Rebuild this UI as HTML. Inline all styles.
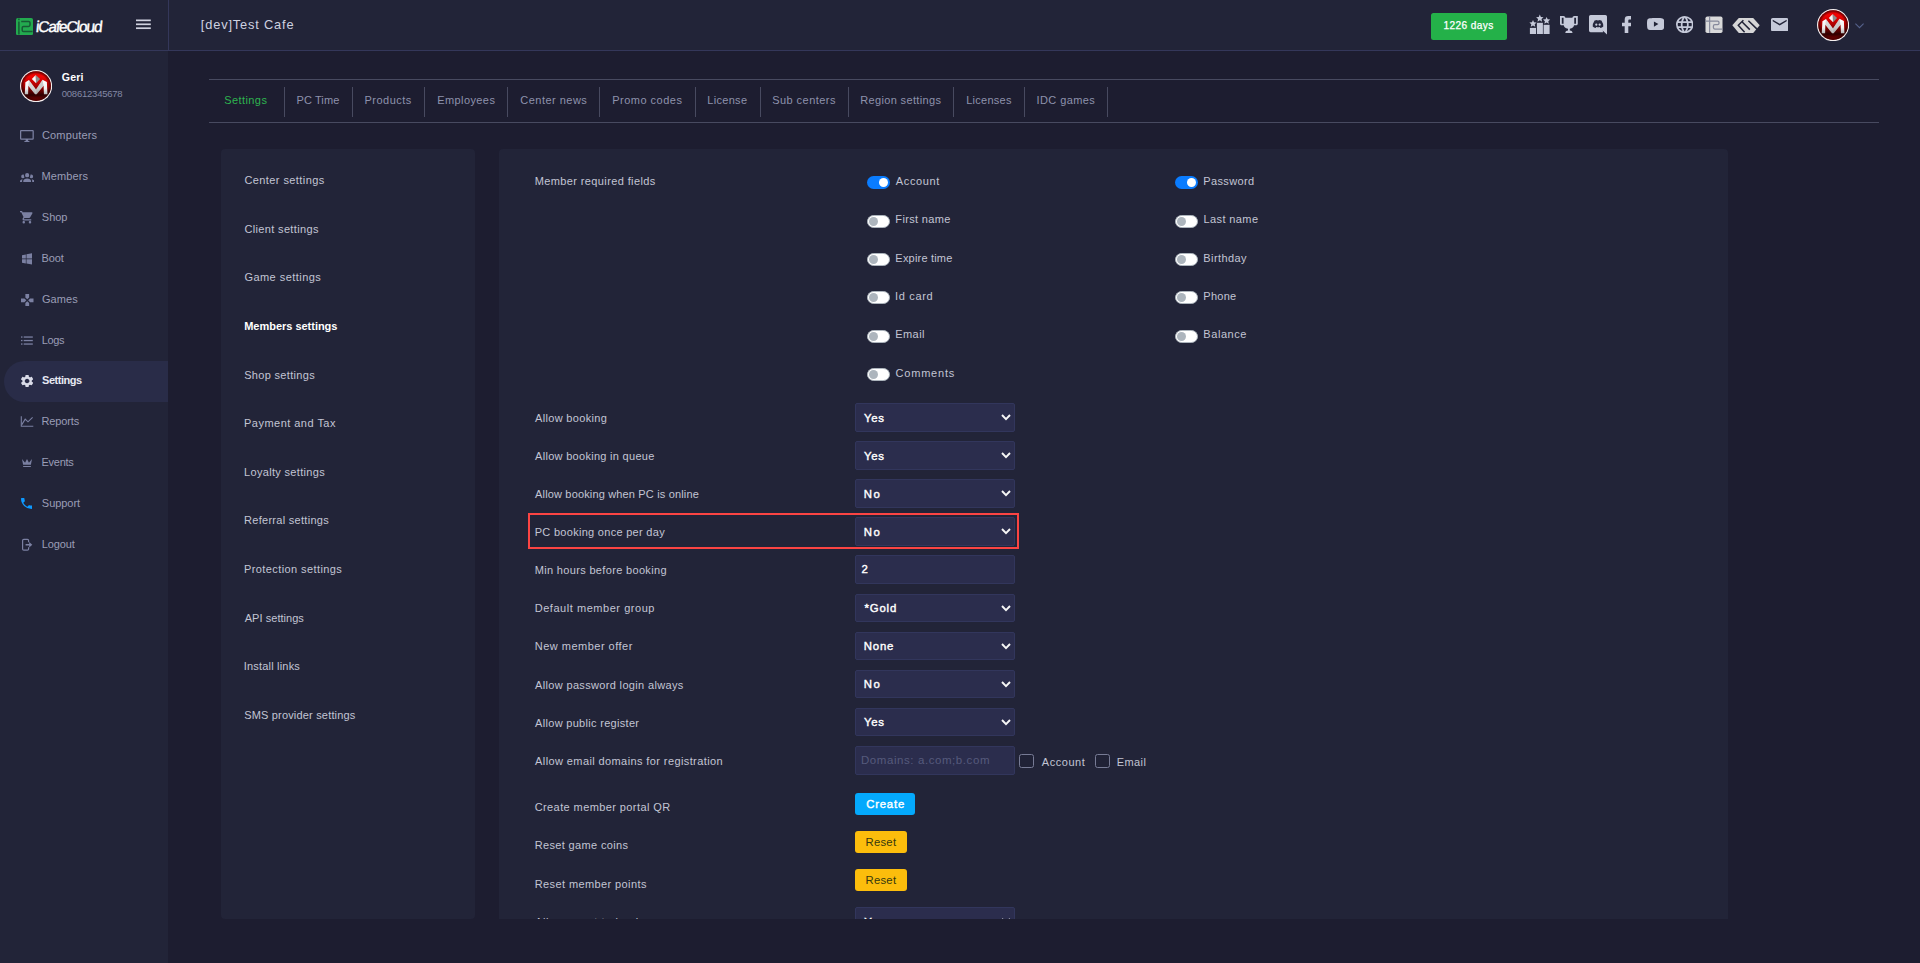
<!DOCTYPE html>
<html><head><meta charset="utf-8"><title>iCafeCloud</title>
<style>
*{box-sizing:border-box;margin:0;padding:0}
html,body{width:1920px;height:963px;overflow:hidden;background:#1d1d30;font-family:"Liberation Sans",sans-serif;}
.a{position:absolute}
.t{position:absolute;white-space:nowrap;line-height:20px;height:20px}
#hdr{left:0;top:0;width:1920px;height:50px;background:#222438}
#hline{left:0;top:50px;width:1920px;height:1px;background:#34375a}
#side{left:0;top:51px;width:168px;height:912px;background:#222438}
#vline{left:168px;top:0;width:1px;height:50px;background:#34375a}
#act{left:4px;top:361px;width:164px;height:41px;background:#292c48;border-radius:20.5px 0 0 20.5px}
.hl{left:209px;width:1670px;height:1px;background:#484a60}
.vs{top:87px;width:1px;height:30px;background:#484a60}
.panel{background:#222438;border-radius:4px}
.sel{left:855px;width:160px;height:29px;background:#2b2d4d;border:1px solid #32365c;border-radius:2px}
.sel svg{position:absolute;right:2px;top:7px}
.tog{width:23px;height:13px;border-radius:7px}
.tog.off{background:#fff;border:1px solid #adb5bd}
.tog.off i{position:absolute;left:1px;top:1px;width:9px;height:9px;border-radius:50%;background:#adb5bd}
.tog.on{background:#0a7cff}
.tog.on i{position:absolute;right:2px;top:2px;width:9px;height:9px;border-radius:50%;background:#fff}
.cb{width:15px;height:14px;border:1px solid #777b95;border-radius:2.5px;background:#202236}
.btn{border-radius:3px;height:22px}
svg{display:block}
</style></head><body>
<div class="a" id="hdr"></div>
<div class="a" id="side"></div>
<div class="a" id="hline"></div>
<div class="a" id="vline"></div>
<div class="a" id="act"></div>
<svg class="a" style="left:16.10px;top:17.80px" width="17.00" height="17.20" viewBox="0 0 17 17.2" preserveAspectRatio="none" ><rect x="0" y="0" width="17" height="17.2" rx="1.8" fill="#23aa4f"/>
<path d="M2.9 0.6 V2.2 M2.9 3.6 V16.6" stroke="#175a34" stroke-width="1.5" fill="none"/>
<path d="M5.2 3.4 H12.6 Q14 3.4 14 4.8 V7 Q14 8.4 12.6 8.4 H7.6 Q6.2 8.4 6.2 9.8 V12.2 Q6.2 13.6 7.6 13.6 H16.6" stroke="#175a34" stroke-width="1.5" fill="none"/></svg>
<svg class="a" style="left:136.20px;top:19.00px" width="14.80" height="10.50" viewBox="0 0 14.8 10.5" preserveAspectRatio="none" ><rect x="0" y="0.5" width="14.8" height="1.7" fill="#d0d2df"/><rect x="0" y="4.45" width="14.8" height="1.7" fill="#d0d2df"/><rect x="0" y="8.35" width="14.8" height="1.7" fill="#d0d2df"/></svg>
<div class="a" style="left:1431px;top:13px;width:76px;height:27px;background:#24b149;border-radius:2.5px"></div>
<svg class="a" style="left:1528.00px;top:13.00px" width="24.00" height="23.00" viewBox="1528 13 24 23" preserveAspectRatio="none" ><g fill="#c5c9d9"><rect x="1529.9" y="27.9" width="6.1" height="6.1"/><rect x="1536.9" y="22.8" width="6" height="11.2"/><rect x="1543.6" y="24.8" width="6" height="9.2"/><polygon points="1533.00,19.90 1534.06,22.24 1536.61,22.53 1534.71,24.26 1535.23,26.77 1533.00,25.50 1530.77,26.77 1531.29,24.26 1529.39,22.53 1531.94,22.24"/><polygon points="1539.80,14.60 1540.89,17.00 1543.51,17.29 1541.56,19.07 1542.09,21.66 1539.80,20.35 1537.51,21.66 1538.04,19.07 1536.09,17.29 1538.71,17.00"/><polygon points="1546.60,16.90 1547.66,19.24 1550.21,19.53 1548.31,21.26 1548.83,23.77 1546.60,22.50 1544.37,23.77 1544.89,21.26 1542.99,19.53 1545.54,19.24"/></g></svg>
<svg class="a" style="left:1560.20px;top:16.00px" width="17.80" height="17.00" viewBox="2 2 20 20" preserveAspectRatio="none" ><path d="M20.2,2H19.5H18C17.1,2 16,3 16,4H8C8,3 6.9,2 6,2H4.5H3.8H2V11C2,12 3,13 4,13H6.2C6.6,15 7.9,16.7 11,17V19.1C8.8,19.3 8,20.4 8,21.7V22H16V21.7C16,20.4 15.2,19.3 13,19.1V17C16.1,16.7 17.4,15 17.8,13H20C21,13 22,12 22,11V2H20.2M4,11V4H6V6V11C5.1,11 4.3,11 4,11M20,11C19.7,11 18.9,11 18,11V6V4H20V11Z" fill="#c5c9d9"/></svg>
<svg class="a" style="left:1588.00px;top:14.00px" width="20.00" height="22.00" viewBox="1588 14 20 22" preserveAspectRatio="none" ><path d="M1590.6 15 H1605.4 Q1607 15 1607 16.6 V34.6 L1602.6 30.6 L1603.2 32.2 H1590.6 Q1589 32.2 1589 30.6 V16.6 Q1589 15 1590.6 15 Z" fill="#c5c9d9"/>
<path d="M1594.6 20.6 Q1596 19.9 1597 19.9 L1597.2 20.4 Q1598 20.3 1598.8 20.4 L1599 19.9 Q1600 19.9 1601.4 20.6 Q1603.4 23.6 1603.3 26.6 Q1602 27.8 1600.4 28 L1599.8 27 Q1598 27.5 1596.2 27 L1595.6 28 Q1594 27.8 1592.7 26.6 Q1592.6 23.6 1594.6 20.6 Z" fill="#25273d"/>
<ellipse cx="1596.3" cy="24.6" rx="1.05" ry="1.2" fill="#c5c9d9"/><ellipse cx="1599.7" cy="24.6" rx="1.05" ry="1.2" fill="#c5c9d9"/></svg>
<svg class="a" style="left:1622.00px;top:16.00px" width="9.00" height="17.00" viewBox="7 2 10 20" preserveAspectRatio="none" ><path d="M17,2V2H17V6H15C14.31,6 14,6.81 14,7.5V10H14L17,10V14H14V22H10V14H7V10H10V6A4,4 0 0,1 14,2H17Z" fill="#c5c9d9"/></svg>
<svg class="a" style="left:1646.70px;top:18.40px" width="17.30" height="12.10" viewBox="2 5 20 14" preserveAspectRatio="none" ><path d="M10,15L15.19,12L10,9V15M21.56,7.17C21.69,7.64 21.78,8.27 21.84,9.07C21.91,9.87 21.94,10.56 21.94,11.16L22,12C22,14.19 21.84,15.8 21.56,16.83C21.31,17.73 20.73,18.31 19.83,18.56C19.36,18.69 18.5,18.78 17.18,18.84C15.88,18.91 14.69,18.94 13.59,18.94L12,19C7.81,19 5.2,18.84 4.17,18.56C3.27,18.31 2.69,17.73 2.44,16.83C2.31,16.36 2.22,15.73 2.16,14.93C2.09,14.13 2.06,13.44 2.06,12.84L2,12C2,9.81 2.16,8.2 2.44,7.17C2.69,6.27 3.27,5.69 4.17,5.44C4.64,5.31 5.5,5.22 6.82,5.16C8.12,5.09 9.31,5.06 10.41,5.06L12,5C16.19,5 18.8,5.16 19.83,5.44C20.73,5.69 21.31,6.27 21.56,7.17Z" fill="#c5c9d9"/></svg>
<svg class="a" style="left:1675.70px;top:15.80px" width="17.50" height="17.20" viewBox="2 2 20 20" preserveAspectRatio="none" ><path d="M16.36,14C16.44,13.34 16.5,12.68 16.5,12C16.5,11.32 16.44,10.66 16.36,10H19.74C19.9,10.64 20,11.31 20,12C20,12.69 19.9,13.36 19.74,14M14.59,19.56C15.19,18.45 15.65,17.25 15.97,16H18.92C17.96,17.65 16.43,18.93 14.59,19.56M14.34,14H9.66C9.56,13.34 9.5,12.68 9.5,12C9.5,11.32 9.56,10.65 9.66,10H14.34C14.43,10.65 14.5,11.32 14.5,12C14.5,12.68 14.43,13.34 14.34,14M12,19.96C11.17,18.76 10.5,17.43 10.09,16H13.91C13.5,17.43 12.83,18.76 12,19.96M8,8H5.08C6.03,6.34 7.57,5.06 9.4,4.44C8.8,5.55 8.35,6.75 8,8M5.08,16H8C8.35,17.25 8.8,18.45 9.4,19.56C7.57,18.93 6.03,17.65 5.08,16M4.26,14C4.1,13.36 4,12.69 4,12C4,11.31 4.1,10.64 4.26,10H7.64C7.56,10.66 7.5,11.32 7.5,12C7.5,12.68 7.56,13.34 7.64,14M12,4.03C12.83,5.23 13.5,6.57 13.91,8H10.09C10.5,6.57 11.17,5.23 12,4.03M18.92,8H15.97C15.65,6.75 15.19,5.55 14.59,4.44C16.43,5.07 17.96,6.34 18.92,8M12,2C6.47,2 2,6.5 2,12A10,10 0 0,0 12,22A10,10 0 0,0 22,12A10,10 0 0,0 12,2Z" fill="#c5c9d9"/></svg>
<svg class="a" style="left:1705.00px;top:16.00px" width="18.00" height="18.00" viewBox="1705 16 18 18" preserveAspectRatio="none" ><rect x="1705.5" y="16.5" width="17" height="16.5" rx="1.8" fill="#d9d9da"/>
<path d="M1709.6 16.8 V32.8" stroke="#878a9c" stroke-width="1.25" fill="none"/>
<path d="M1705.6 21 H1717.6 Q1719 21 1719 22.4 V23.2 Q1719 24.6 1717.6 24.6 H1714.8 Q1713.4 24.6 1713.4 26 V27.6 Q1713.4 29 1714.8 29 H1722.4" stroke="#878a9c" stroke-width="1.25" fill="none"/></svg>
<svg class="a" style="left:1731.00px;top:16.00px" width="30.00" height="19.00" viewBox="1731 16 30 19" preserveAspectRatio="none" ><polygon points="1732.3,25.3 1738.8,17.9 1753.2,17.9 1759.7,25.3 1753.2,33 1738.8,33" fill="#d6d6d7"/>
<path d="M1743.4 20.3 L1738.3 25.3 L1744.6 32.3 M1742.2 22 L1749.8 29.6 M1748.4 20.8 L1756.8 28.9" stroke="#222438" stroke-width="1.5" fill="none"/>
<path d="M1756.6 29.2 L1759 31.6" stroke="#222438" stroke-width="1.4" fill="none"/></svg>
<svg class="a" style="left:1770.80px;top:17.70px" width="17.40" height="13.30" viewBox="2 4 20 16" preserveAspectRatio="none" ><path d="M20,8L12,13L4,8V6L12,11L20,6M20,4H4C2.89,4 2,4.89 2,6V18A2,2 0 0,0 4,20H20A2,2 0 0,0 22,18V6C22,4.89 21.1,4 20,4Z" fill="#c5c9d9"/></svg>
<svg class="a" style="left:1816.90px;top:8.80px" width="32.20" height="32.20" viewBox="159 111 738 738" preserveAspectRatio="none" ><defs><linearGradient id="rgh" x1="0" y1="0" x2="0" y2="1"><stop offset="0" stop-color="#e00000"/><stop offset="0.18" stop-color="#f20404"/><stop offset="0.5" stop-color="#a80000"/><stop offset="0.8" stop-color="#2e0000"/><stop offset="0.93" stop-color="#6a0000"/><stop offset="1" stop-color="#8a0000"/></linearGradient>
<linearGradient id="mgh" x1="0" y1="0" x2="0" y2="1"><stop offset="0" stop-color="#ffffff"/><stop offset="0.6" stop-color="#f2f2f2"/><stop offset="1" stop-color="#b8b8b8"/></linearGradient>
<radialGradient id="vgh" cx="0.5" cy="0.5" r="0.5"><stop offset="0.8" stop-color="#300000" stop-opacity="0"/><stop offset="1" stop-color="#300000" stop-opacity="0.75"/></radialGradient></defs>
<circle cx="528" cy="480" r="369" fill="#f4eeee"/><circle cx="528" cy="480" r="340" fill="url(#rgh)"/><circle cx="528" cy="480" r="340" fill="url(#vgh)"/>
<polygon points="268,665 283,390 365,340 525,560 675,335 775,385 788,665 708,665 700,470 540,665 505,665 350,470 345,665" fill="url(#mgh)"/>
<polygon points="520,228 527,414 430,320" fill="#f6f6f6"/><polygon points="520,228 620,320 527,414" fill="#8c8c8c"/><polygon points="365,340 525,560 505,665 350,470" fill="#9a9a9a" opacity="0.35"/><polygon points="675,335 700,470 540,665 525,560" fill="#6a6a6a" opacity="0.3"/></svg>
<svg class="a" style="left:1854.00px;top:21.50px" width="11.00" height="7.50" viewBox="1854 21.5 11 7.5" preserveAspectRatio="none" ><path d="M1855.4 23.2 L1859.5 27.2 L1863.6 23.2" stroke="#56628c" stroke-width="1.05" fill="none"/></svg>
<svg class="a" style="left:19.90px;top:69.90px" width="32.20" height="32.20" viewBox="159 111 738 738" preserveAspectRatio="none" ><defs><linearGradient id="rgs" x1="0" y1="0" x2="0" y2="1"><stop offset="0" stop-color="#e00000"/><stop offset="0.18" stop-color="#f20404"/><stop offset="0.5" stop-color="#a80000"/><stop offset="0.8" stop-color="#2e0000"/><stop offset="0.93" stop-color="#6a0000"/><stop offset="1" stop-color="#8a0000"/></linearGradient>
<linearGradient id="mgs" x1="0" y1="0" x2="0" y2="1"><stop offset="0" stop-color="#ffffff"/><stop offset="0.6" stop-color="#f2f2f2"/><stop offset="1" stop-color="#b8b8b8"/></linearGradient>
<radialGradient id="vgs" cx="0.5" cy="0.5" r="0.5"><stop offset="0.8" stop-color="#300000" stop-opacity="0"/><stop offset="1" stop-color="#300000" stop-opacity="0.75"/></radialGradient></defs>
<circle cx="528" cy="480" r="369" fill="#f4eeee"/><circle cx="528" cy="480" r="340" fill="url(#rgs)"/><circle cx="528" cy="480" r="340" fill="url(#vgs)"/>
<polygon points="268,665 283,390 365,340 525,560 675,335 775,385 788,665 708,665 700,470 540,665 505,665 350,470 345,665" fill="url(#mgs)"/>
<polygon points="520,228 527,414 430,320" fill="#f6f6f6"/><polygon points="520,228 620,320 527,414" fill="#8c8c8c"/><polygon points="365,340 525,560 505,665 350,470" fill="#9a9a9a" opacity="0.35"/><polygon points="675,335 700,470 540,665 525,560" fill="#6a6a6a" opacity="0.3"/></svg>
<svg class="a" style="left:20.20px;top:129.80px" width="13.80" height="12.20" viewBox="1 2 22 20" preserveAspectRatio="none" ><path d="M21,16H3V4H21M21,2H3C1.89,2 1,2.89 1,4V16A2,2 0 0,0 3,18H10V20H8V22H16V20H14V18H21A2,2 0 0,0 23,16V4C23,2.89 22.1,2 21,2Z" fill="#7b80a2"/></svg>
<svg class="a" style="left:19.90px;top:172.80px" width="14.30" height="9.00" viewBox="0 5.5 24 14.5" preserveAspectRatio="none" ><path d="M12,5.5A3.5,3.5 0 0,1 15.5,9A3.5,3.5 0 0,1 12,12.5A3.5,3.5 0 0,1 8.5,9A3.5,3.5 0 0,1 12,5.5M5,8C5.56,8 6.08,8.15 6.53,8.42C6.38,9.85 6.8,11.27 7.66,12.38C7.16,13.34 6.16,14 5,14A3,3 0 0,1 2,11A3,3 0 0,1 5,8M19,8A3,3 0 0,1 22,11A3,3 0 0,1 19,14C17.84,14 16.84,13.34 16.34,12.38C17.2,11.27 17.62,9.85 17.47,8.42C17.92,8.15 18.44,8 19,8M5.5,18.25C5.5,16.18 8.41,14.5 12,14.5C15.59,14.5 18.5,16.18 18.5,18.25V20H5.5V18.25M0,20V18.5C0,17.11 1.89,15.94 4.45,15.6C3.86,16.28 3.5,17.22 3.5,18.25V20H0M24,20H20.5V18.25C20.5,17.22 20.14,16.28 19.55,15.6C22.11,15.94 24,17.11 24,18.5V20Z" fill="#7b80a2"/></svg>
<svg class="a" style="left:20.20px;top:211.40px" width="12.50" height="12.50" viewBox="1 2 20 20" preserveAspectRatio="none" ><path d="M17,18C15.89,18 15,18.89 15,20A2,2 0 0,0 17,22A2,2 0 0,0 19,20C19,18.89 18.1,18 17,18M1,2V4H3L6.6,11.59L5.24,14.04C5.09,14.32 5,14.65 5,15A2,2 0 0,0 7,17H19V15H7.42A0.25,0.25 0 0,1 7.17,14.75C7.17,14.7 7.18,14.66 7.2,14.63L8.1,13H15.55C16.3,13 16.96,12.58 17.3,11.97L20.88,5.5C20.95,5.34 21,5.17 21,5A1,1 0 0,0 20,4H5.21L4.27,2M7,18C5.89,18 5,18.89 5,20A2,2 0 0,0 7,22A2,2 0 0,0 9,20C9,18.89 8.1,18 7,18Z" fill="#7b80a2"/></svg>
<svg class="a" style="left:21.50px;top:253.00px" width="10.90" height="11.70" viewBox="3 3 17 19" preserveAspectRatio="none" ><path d="M3,12V6.75L9,5.43V11.91L3,12M20,3V11.75L10,11.9V5.21L20,3M3,13L9,13.09V19.9L3,18.75V13M20,13.25V22L10,20.09V13.1L20,13.25Z" fill="#7b80a2"/></svg>
<svg class="a" style="left:21.00px;top:293.50px" width="12.50" height="12.50" viewBox="2 2 20 20" preserveAspectRatio="none" ><path d="M15,7.5V2H9V7.5L12,10.5L15,7.5M7.5,9H2V15H7.5L10.5,12L7.5,9M9,16.5V22H15V16.5L12,13.5L9,16.5M16.5,9L13.5,12L16.5,15H22V9H16.5Z" fill="#7b80a2"/></svg>
<svg class="a" style="left:20.00px;top:335.00px" width="14.00" height="11.00" viewBox="20 335 14 11" preserveAspectRatio="none" ><rect x="21" y="336.4" width="1.5" height="1.3" fill="#7b80a2"/><rect x="23.7" y="336.4" width="9.1" height="1.3" fill="#7b80a2"/><rect x="21" y="339.9" width="1.5" height="1.3" fill="#7b80a2"/><rect x="23.7" y="339.9" width="9.1" height="1.3" fill="#7b80a2"/><rect x="21" y="343.4" width="1.5" height="1.3" fill="#7b80a2"/><rect x="23.7" y="343.4" width="9.1" height="1.3" fill="#7b80a2"/></svg>
<svg class="a" style="left:20.80px;top:374.80px" width="12.20" height="12.10" viewBox="2.66 2.4 18.68 19.200000000000003" preserveAspectRatio="none" ><path d="M19.14,12.94c0.04-0.3,0.06-0.61,0.06-0.94c0-0.32-0.02-0.64-0.07-0.94l2.03-1.58c0.18-0.14,0.23-0.41,0.12-0.61 l-1.92-3.32c-0.12-0.22-0.37-0.29-0.59-0.22l-2.39,0.96c-0.5-0.38-1.03-0.7-1.62-0.94L14.4,2.81c-0.04-0.24-0.24-0.41-0.48-0.41 h-3.84c-0.24,0-0.43,0.17-0.47,0.41L9.25,5.35C8.66,5.59,8.12,5.92,7.63,6.29L5.24,5.33c-0.22-0.08-0.47,0-0.59,0.22L2.74,8.87 C2.62,9.08,2.66,9.34,2.86,9.48l2.03,1.58C4.84,11.36,4.8,11.69,4.8,12s0.02,0.64,0.07,0.94l-2.03,1.58 c-0.18,0.14-0.23,0.41-0.12,0.61l1.92,3.32c0.12,0.22,0.37,0.29,0.59,0.22l2.39-0.96c0.5,0.38,1.03,0.7,1.62,0.94l0.36,2.54 c0.05,0.24,0.24,0.41,0.48,0.41h3.84c0.24,0,0.44-0.17,0.47-0.41l0.36-2.54c0.59-0.24,1.13-0.56,1.62-0.94l2.39,0.96 c0.22,0.08,0.47,0,0.59-0.22l1.92-3.32c0.12-0.22,0.07-0.47-0.12-0.61L19.14,12.94z M12,15.6c-1.98,0-3.6-1.62-3.6-3.6 s1.62-3.6,3.6-3.6s3.6,1.62,3.6,3.6S13.98,15.6,12,15.6z" fill="#d9dbe8"/></svg>
<svg class="a" style="left:20.00px;top:415.00px" width="15.00" height="13.00" viewBox="20 415 15 13" preserveAspectRatio="none" ><path d="M21.3 416.3 V426.2 H33.3" stroke="#7b80a2" stroke-width="1.1" fill="none"/><path d="M21.8 424.6 L25.2 419.2 L28 421.8 L32.6 417.4" stroke="#7b80a2" stroke-width="1.1" fill="none"/></svg>
<svg class="a" style="left:22.00px;top:459.00px" width="10.00" height="8.00" viewBox="3 5 18 15" preserveAspectRatio="none" ><path d="M5,16L3,5L8.5,12L12,5L15.5,12L21,5L19,16H5M19,19A1,1 0 0,1 18,20H6A1,1 0 0,1 5,19V18H19V19Z" fill="#7b80a2"/></svg>
<svg class="a" style="left:21.20px;top:498.00px" width="11.30" height="10.90" viewBox="3 3 18 18" preserveAspectRatio="none" ><path d="M6.62,10.79C8.06,13.62 10.38,15.94 13.21,17.38L15.41,15.18C15.69,14.9 16.08,14.82 16.43,14.93C17.55,15.3 18.75,15.5 20,15.5A1,1 0 0,1 21,16.5V20A1,1 0 0,1 20,21A17,17 0 0,1 3,4A1,1 0 0,1 4,3H7.5A1,1 0 0,1 8.5,4C8.5,5.25 8.7,6.45 9.07,7.57C9.18,7.92 9.1,8.31 8.82,8.59L6.62,10.79Z" fill="#0d99ff"/></svg>
<svg class="a" style="left:21.00px;top:538.00px" width="13.00" height="14.00" viewBox="21 538 13 14" preserveAspectRatio="none" ><path d="M28.6 542.2 V540.6 Q28.6 539.4 27.4 539.4 H23.8 Q22.6 539.4 22.6 540.6 V548.9 Q22.6 550.1 23.8 550.1 H27.4 Q28.6 550.1 28.6 548.9 V547.3" stroke="#7b80a2" stroke-width="1.2" fill="none"/><path d="M25.6 543.9 H29.2 V541.9 L32.3 544.75 L29.2 547.6 V545.6 H25.6 Z" fill="#7b80a2"/></svg>
<div class="a hl" style="top:79px"></div>
<div class="a hl" style="top:122px"></div>
<div class="a vs" style="left:284px"></div>
<div class="a vs" style="left:352px"></div>
<div class="a vs" style="left:424px"></div>
<div class="a vs" style="left:507px"></div>
<div class="a vs" style="left:599px"></div>
<div class="a vs" style="left:695px"></div>
<div class="a vs" style="left:760px"></div>
<div class="a vs" style="left:848px"></div>
<div class="a vs" style="left:953px"></div>
<div class="a vs" style="left:1024px"></div>
<div class="a vs" style="left:1107px"></div>
<div class="a panel" style="left:221px;top:149px;width:254px;height:770px"></div>
<div class="a panel" style="left:499px;top:149px;width:1229px;height:770px;border-radius:4px 4px 0 0"></div>
<div class="a sel" style="top:403px;height:29px"><svg width="12" height="12" viewBox="0 0 12 12"><path d="M2 4 L6 8.2 L10 4" fill="none" stroke="#f6f6f6" stroke-width="1.9" stroke-linecap="butt" stroke-linejoin="miter"/></svg></div>
<div class="a sel" style="top:441px;height:29px"><svg width="12" height="12" viewBox="0 0 12 12"><path d="M2 4 L6 8.2 L10 4" fill="none" stroke="#f6f6f6" stroke-width="1.9" stroke-linecap="butt" stroke-linejoin="miter"/></svg></div>
<div class="a sel" style="top:479px;height:29px"><svg width="12" height="12" viewBox="0 0 12 12"><path d="M2 4 L6 8.2 L10 4" fill="none" stroke="#f6f6f6" stroke-width="1.9" stroke-linecap="butt" stroke-linejoin="miter"/></svg></div>
<div class="a sel" style="top:517px;height:29px"><svg width="12" height="12" viewBox="0 0 12 12"><path d="M2 4 L6 8.2 L10 4" fill="none" stroke="#f6f6f6" stroke-width="1.9" stroke-linecap="butt" stroke-linejoin="miter"/></svg></div>
<div class="a sel" style="top:555px;height:29px"></div>
<div class="a sel" style="top:594px;height:28px"><svg width="12" height="12" viewBox="0 0 12 12"><path d="M2 4 L6 8.2 L10 4" fill="none" stroke="#f6f6f6" stroke-width="1.9" stroke-linecap="butt" stroke-linejoin="miter"/></svg></div>
<div class="a sel" style="top:632px;height:28px"><svg width="12" height="12" viewBox="0 0 12 12"><path d="M2 4 L6 8.2 L10 4" fill="none" stroke="#f6f6f6" stroke-width="1.9" stroke-linecap="butt" stroke-linejoin="miter"/></svg></div>
<div class="a sel" style="top:670px;height:28px"><svg width="12" height="12" viewBox="0 0 12 12"><path d="M2 4 L6 8.2 L10 4" fill="none" stroke="#f6f6f6" stroke-width="1.9" stroke-linecap="butt" stroke-linejoin="miter"/></svg></div>
<div class="a sel" style="top:708px;height:28px"><svg width="12" height="12" viewBox="0 0 12 12"><path d="M2 4 L6 8.2 L10 4" fill="none" stroke="#f6f6f6" stroke-width="1.9" stroke-linecap="butt" stroke-linejoin="miter"/></svg></div>
<div class="a sel" style="top:746px;height:29px"></div>
<div class="a sel" style="top:907px;height:29px"><svg width="12" height="12" viewBox="0 0 12 12"><path d="M2 4 L6 8.2 L10 4" fill="none" stroke="#f6f6f6" stroke-width="1.9" stroke-linecap="butt" stroke-linejoin="miter"/></svg></div>
<div class="a tog on" style="left:867px;top:176.2px"><i></i></div>
<div class="a tog on" style="left:1175px;top:176.2px"><i></i></div>
<div class="a tog off" style="left:867px;top:214.6px"><i></i></div>
<div class="a tog off" style="left:1175px;top:214.6px"><i></i></div>
<div class="a tog off" style="left:867px;top:252.9px"><i></i></div>
<div class="a tog off" style="left:1175px;top:252.9px"><i></i></div>
<div class="a tog off" style="left:867px;top:291.2px"><i></i></div>
<div class="a tog off" style="left:1175px;top:291.2px"><i></i></div>
<div class="a tog off" style="left:867px;top:329.5px"><i></i></div>
<div class="a tog off" style="left:1175px;top:329.5px"><i></i></div>
<div class="a tog off" style="left:867px;top:367.9px"><i></i></div>
<div class="a cb" style="left:1019px;top:754px"></div>
<div class="a cb" style="left:1094.5px;top:754px"></div>
<div class="a btn" style="left:855px;top:793px;width:60px;background:#04a9fc"></div>
<div class="a btn" style="left:855px;top:831px;width:52px;background:#fcbd0c"></div>
<div class="a btn" style="left:855px;top:869px;width:52px;background:#fcbd0c"></div>
<div class="a" style="left:528px;top:513px;width:491px;height:36px;border:2px solid #fb4443"></div>
<span class="t" id="sb0" style="left:41.96px;top:125.19px;font-size:11.0px;color:#9a9db6;letter-spacing:0.168px;">Computers</span>
<span class="t" id="sb1" style="left:41.54px;top:166.19px;font-size:11.0px;color:#9a9db6;letter-spacing:0.094px;">Members</span>
<span class="t" id="sb2" style="left:41.85px;top:207.19px;font-size:11.0px;color:#9a9db6;letter-spacing:-0.033px;">Shop</span>
<span class="t" id="sb3" style="left:41.54px;top:248.19px;font-size:11.0px;color:#9a9db6;letter-spacing:-0.081px;">Boot</span>
<span class="t" id="sb4" style="left:41.90px;top:289.19px;font-size:11.0px;color:#9a9db6;letter-spacing:0.099px;">Games</span>
<span class="t" id="sb5" style="left:41.71px;top:330.19px;font-size:11.0px;color:#9a9db6;letter-spacing:-0.391px;">Logs</span>
<span class="t" id="sb6" style="left:42.09px;top:370.19px;font-size:11.0px;color:#e6e8f2;letter-spacing:-0.471px;font-weight:700;">Settings</span>
<span class="t" id="sb7" style="left:41.54px;top:411.19px;font-size:11.0px;color:#9a9db6;letter-spacing:-0.144px;">Reports</span>
<span class="t" id="sb8" style="left:41.54px;top:452.19px;font-size:11.0px;color:#9a9db6;letter-spacing:-0.257px;">Events</span>
<span class="t" id="sb9" style="left:41.85px;top:493.19px;font-size:11.0px;color:#9a9db6;letter-spacing:-0.043px;">Support</span>
<span class="t" id="sb10" style="left:41.71px;top:534.19px;font-size:11.0px;color:#9a9db6;letter-spacing:-0.107px;">Logout</span>
<span class="t" id="uname" style="left:61.74px;top:67.08px;font-size:10.6px;color:#ffffff;letter-spacing:0.183px;font-weight:700;">Geri</span>
<span class="t" id="uphone" style="left:61.73px;top:84.21px;font-size:9.5px;color:#8388a5;letter-spacing:-0.225px;">008612345678</span>
<span class="t" id="cafe" style="left:200.85px;top:15.06px;font-size:12.8px;color:#cfd2e0;letter-spacing:0.837px;">[dev]Test Cafe</span>
<span class="t" id="logo" style="left:34.75px;top:16.88px;font-size:15.5px;color:#ffffff;letter-spacing:-1.130px;transform:skewX(-6deg);transform-origin:0 100%;-webkit-text-stroke:0.4px #fff;">iCafeCloud</span>
<span class="t" id="days" style="left:1443.39px;top:16.25px;font-size:10.1px;color:#ffffff;letter-spacing:0.407px;-webkit-text-stroke:0.25px #fff;">1226 days</span>
<span class="t" id="tab0" style="left:224.14px;top:90.19px;font-size:11.0px;color:#2db44f;letter-spacing:0.431px;">Settings</span>
<span class="t" id="tab1" style="left:296.54px;top:90.19px;font-size:11.0px;color:#8e92ac;letter-spacing:0.097px;">PC Time</span>
<span class="t" id="tab2" style="left:364.54px;top:90.19px;font-size:11.0px;color:#8e92ac;letter-spacing:0.465px;">Products</span>
<span class="t" id="tab3" style="left:437.25px;top:90.19px;font-size:11.0px;color:#8e92ac;letter-spacing:0.402px;">Employees</span>
<span class="t" id="tab4" style="left:520.29px;top:90.19px;font-size:11.0px;color:#8e92ac;letter-spacing:0.483px;">Center news</span>
<span class="t" id="tab5" style="left:612.25px;top:90.19px;font-size:11.0px;color:#8e92ac;letter-spacing:0.486px;">Promo codes</span>
<span class="t" id="tab6" style="left:707.25px;top:90.19px;font-size:11.0px;color:#8e92ac;letter-spacing:0.305px;">License</span>
<span class="t" id="tab7" style="left:772.14px;top:90.19px;font-size:11.0px;color:#8e92ac;letter-spacing:0.461px;">Sub centers</span>
<span class="t" id="tab8" style="left:860.25px;top:90.19px;font-size:11.0px;color:#8e92ac;letter-spacing:0.345px;">Region settings</span>
<span class="t" id="tab9" style="left:966.25px;top:90.19px;font-size:11.0px;color:#8e92ac;letter-spacing:0.249px;">Licenses</span>
<span class="t" id="tab10" style="left:1036.51px;top:90.19px;font-size:11.0px;color:#8e92ac;letter-spacing:0.416px;">IDC games</span>
<span class="t" id="lp0" style="left:244.41px;top:170.19px;font-size:11.0px;color:#c3c5d4;letter-spacing:0.418px;">Center settings</span>
<span class="t" id="lp1" style="left:244.41px;top:219.19px;font-size:11.0px;color:#c3c5d4;letter-spacing:0.351px;">Client settings</span>
<span class="t" id="lp2" style="left:244.39px;top:267.19px;font-size:11.0px;color:#c3c5d4;letter-spacing:0.462px;">Game settings</span>
<span class="t" id="lp3" style="left:244.21px;top:316.19px;font-size:11.0px;color:#ffffff;letter-spacing:-0.020px;font-weight:700;">Members settings</span>
<span class="t" id="lp4" style="left:244.13px;top:365.19px;font-size:11.0px;color:#c3c5d4;letter-spacing:0.324px;">Shop settings</span>
<span class="t" id="lp5" style="left:244.04px;top:413.19px;font-size:11.0px;color:#c3c5d4;letter-spacing:0.473px;">Payment and Tax</span>
<span class="t" id="lp6" style="left:244.04px;top:462.19px;font-size:11.0px;color:#c3c5d4;letter-spacing:0.324px;">Loyalty settings</span>
<span class="t" id="lp7" style="left:244.04px;top:510.19px;font-size:11.0px;color:#c3c5d4;letter-spacing:0.288px;">Referral settings</span>
<span class="t" id="lp8" style="left:244.04px;top:559.19px;font-size:11.0px;color:#c3c5d4;letter-spacing:0.407px;">Protection settings</span>
<span class="t" id="lp9" style="left:244.74px;top:608.19px;font-size:11.0px;color:#c3c5d4;letter-spacing:0.040px;">API settings</span>
<span class="t" id="lp10" style="left:243.83px;top:656.19px;font-size:11.0px;color:#c3c5d4;letter-spacing:0.185px;">Install links</span>
<span class="t" id="lp11" style="left:244.13px;top:705.19px;font-size:11.0px;color:#c3c5d4;letter-spacing:0.181px;">SMS provider settings</span>
<span class="t" id="fl0" style="left:534.73px;top:171.19px;font-size:11.0px;color:#c3c5d4;letter-spacing:0.383px;">Member required fields</span>
<span class="t" id="fl1" style="left:535.09px;top:408.19px;font-size:11.0px;color:#c3c5d4;letter-spacing:0.320px;">Allow booking</span>
<span class="t" id="fl2" style="left:535.09px;top:446.19px;font-size:11.0px;color:#c3c5d4;letter-spacing:0.294px;">Allow booking in queue</span>
<span class="t" id="fl3" style="left:535.09px;top:484.19px;font-size:11.0px;color:#c3c5d4;letter-spacing:0.158px;">Allow booking when PC is online</span>
<span class="t" id="fl4" style="left:534.73px;top:522.19px;font-size:11.0px;color:#c3c5d4;letter-spacing:0.291px;">PC booking once per day</span>
<span class="t" id="fl5" style="left:534.73px;top:560.19px;font-size:11.0px;color:#c3c5d4;letter-spacing:0.333px;">Min hours before booking</span>
<span class="t" id="fl6" style="left:534.70px;top:598.19px;font-size:11.0px;color:#c3c5d4;letter-spacing:0.544px;">Default member group</span>
<span class="t" id="fl7" style="left:534.73px;top:636.19px;font-size:11.0px;color:#c3c5d4;letter-spacing:0.491px;">New member offer</span>
<span class="t" id="fl8" style="left:535.09px;top:675.19px;font-size:11.0px;color:#c3c5d4;letter-spacing:0.337px;">Allow password login always</span>
<span class="t" id="fl9" style="left:535.09px;top:713.19px;font-size:11.0px;color:#c3c5d4;letter-spacing:0.306px;">Allow public register</span>
<span class="t" id="fl10" style="left:535.09px;top:751.19px;font-size:11.0px;color:#c3c5d4;letter-spacing:0.397px;">Allow email domains for registration</span>
<span class="t" id="fl11" style="left:534.69px;top:797.19px;font-size:11.0px;color:#c3c5d4;letter-spacing:0.404px;">Create member portal QR</span>
<span class="t" id="fl12" style="left:534.73px;top:835.19px;font-size:11.0px;color:#c3c5d4;letter-spacing:0.348px;">Reset game coins</span>
<span class="t" id="fl13" style="left:534.73px;top:874.19px;font-size:11.0px;color:#c3c5d4;letter-spacing:0.398px;">Reset member points</span>
<span class="t" id="tga0" style="left:895.85px;top:171.19px;font-size:11.0px;color:#c3c5d4;letter-spacing:0.624px;">Account</span>
<span class="t" id="tga1" style="left:895.35px;top:209.19px;font-size:11.0px;color:#c3c5d4;letter-spacing:0.335px;">First name</span>
<span class="t" id="tga2" style="left:895.35px;top:248.19px;font-size:11.0px;color:#c3c5d4;letter-spacing:0.196px;">Expire time</span>
<span class="t" id="tga3" style="left:895.11px;top:286.19px;font-size:11.0px;color:#c3c5d4;letter-spacing:0.663px;">Id card</span>
<span class="t" id="tga4" style="left:895.35px;top:324.19px;font-size:11.0px;color:#c3c5d4;letter-spacing:0.388px;">Email</span>
<span class="t" id="tga5" style="left:895.54px;top:363.19px;font-size:11.0px;color:#c3c5d4;letter-spacing:0.792px;">Comments</span>
<span class="t" id="tgb0" style="left:1203.35px;top:171.19px;font-size:11.0px;color:#c3c5d4;letter-spacing:0.337px;">Password</span>
<span class="t" id="tgb1" style="left:1203.59px;top:209.19px;font-size:11.0px;color:#c3c5d4;letter-spacing:0.385px;">Last name</span>
<span class="t" id="tgb2" style="left:1203.35px;top:248.19px;font-size:11.0px;color:#c3c5d4;letter-spacing:0.398px;">Birthday</span>
<span class="t" id="tgb3" style="left:1203.35px;top:286.19px;font-size:11.0px;color:#c3c5d4;letter-spacing:0.248px;">Phone</span>
<span class="t" id="tgb4" style="left:1203.35px;top:324.19px;font-size:11.0px;color:#c3c5d4;letter-spacing:0.558px;">Balance</span>
<span class="t" id="sv0" style="left:863.99px;top:408.05px;font-size:11.4px;color:#ffffff;letter-spacing:0.710px;-webkit-text-stroke:0.4px #fff;">Yes</span>
<span class="t" id="sv1" style="left:863.99px;top:446.05px;font-size:11.4px;color:#ffffff;letter-spacing:0.710px;-webkit-text-stroke:0.4px #fff;">Yes</span>
<span class="t" id="sv2" style="left:863.87px;top:484.05px;font-size:11.4px;color:#ffffff;letter-spacing:1.306px;-webkit-text-stroke:0.4px #fff;">No</span>
<span class="t" id="sv3" style="left:863.87px;top:522.05px;font-size:11.4px;color:#ffffff;letter-spacing:1.306px;-webkit-text-stroke:0.4px #fff;">No</span>
<span class="t" id="sv5" style="left:864.55px;top:598.05px;font-size:11.4px;color:#ffffff;letter-spacing:0.794px;-webkit-text-stroke:0.4px #fff;">*Gold</span>
<span class="t" id="sv6" style="left:863.87px;top:636.05px;font-size:11.4px;color:#ffffff;letter-spacing:0.752px;-webkit-text-stroke:0.4px #fff;">None</span>
<span class="t" id="sv7" style="left:863.87px;top:674.05px;font-size:11.4px;color:#ffffff;letter-spacing:1.306px;-webkit-text-stroke:0.4px #fff;">No</span>
<span class="t" id="sv8" style="left:863.99px;top:712.05px;font-size:11.4px;color:#ffffff;letter-spacing:0.710px;-webkit-text-stroke:0.4px #fff;">Yes</span>
<span class="t" id="in2" style="left:861.38px;top:559.05px;font-size:11.4px;color:#ffffff;letter-spacing:8.376px;-webkit-text-stroke:0.4px #fff;">2</span>
<span class="t" id="ph" style="left:860.98px;top:750.02px;font-size:11.5px;color:#565a7c;letter-spacing:0.575px;">Domains: a.com;b.com</span>
<span class="t" id="cbA" style="left:1041.74px;top:752.19px;font-size:11.0px;color:#c3c5d4;letter-spacing:0.561px;">Account</span>
<span class="t" id="cbE" style="left:1116.73px;top:752.19px;font-size:11.0px;color:#c3c5d4;letter-spacing:0.426px;">Email</span>
<span class="t" id="bCreate" style="left:866.27px;top:794.08px;font-size:11.3px;color:#ffffff;letter-spacing:0.798px;-webkit-text-stroke:0.4px #fff;">Create</span>
<span class="t" id="bR1" style="left:865.51px;top:832.08px;font-size:11.3px;color:#35380f;letter-spacing:0.253px;">Reset</span>
<span class="t" id="bR2" style="left:865.51px;top:870.08px;font-size:11.3px;color:#35380f;letter-spacing:0.253px;">Reset</span>
<span class="t" id="svL" style="left:864.31px;top:912.05px;font-size:11.4px;color:#ffffff;letter-spacing:0.457px;-webkit-text-stroke:0.4px #fff;">Yes</span>
<span class="t" id="flL" style="left:535.09px;top:912.19px;font-size:11.0px;color:#c3c5d4;letter-spacing:0.600px;">Allow guest to book</span>
<div class="a" style="left:499px;top:919px;width:1229px;height:44px;background:#1d1d30"></div>
</body></html>
